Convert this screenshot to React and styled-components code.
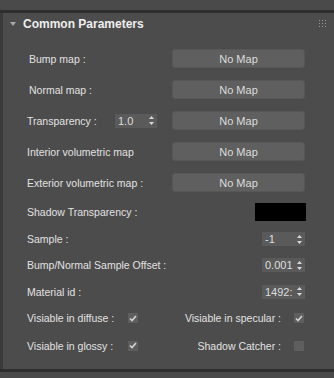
import React from "react";
import styled, { createGlobalStyle } from "styled-components";

const Global = createGlobalStyle`
  html, body { margin: 0; padding: 0; background: #4b4b4b; }
  body { font-family: "Liberation Sans", Arial, sans-serif; font-size: 10.5px; color: #e4e4e4; }
  * { box-sizing: border-box; }
`;

const Page = styled.div`
  width: 334px;
  height: 378px;
  display: flex;
  flex-direction: column;
  background: #4b4b4b;
  overflow: hidden;
`;

const Band = styled.div`
  height: ${(p) => p.$h}px;
  background: #4a4a4a;
  flex: none;
`;

const Divider = styled.div`
  height: 3px;
  background: #2e2e2e;
  flex: none;
`;

const Rollout = styled.div`
  flex: 1;
  display: flex;
  min-height: 0;
`;

const LeftStrip = styled.div`
  width: 3px;
  background: #3a3a3a;
  flex: none;
`;

const Body = styled.div`
  flex: 1;
  display: flex;
  flex-direction: column;
  background: #4c4c4c;
`;

const Header = styled.div`
  height: 22px;
  margin-bottom: 8px;
  display: flex;
  align-items: center;
  padding-left: 7px;
  padding-right: 8px;
`;

const Title = styled.div`
  font-weight: bold;
  font-size: 12px;
  color: #eeeeee;
  margin-left: 7px;
  flex: 1;
`;

const Row = styled.div`
  height: ${(p) => p.$h}px;
  display: flex;
  align-items: center;
  padding-left: 24px;
  padding-right: 29px;
`;

const Label = styled.div`
  flex: 1;
  white-space: nowrap;
  color: #e2e2e2;
`;

const MapButton = styled.div`
  width: 133px;
  height: ${(p) => p.$h || 19}px;
  background: #5f5f5f;
  border: 1px solid #575757;
  border-radius: 3px;
  display: flex;
  align-items: center;
  justify-content: center;
  color: #dcdcdc;
  font-size: 11px;
`;

const Spinner = styled.div`
  width: ${(p) => p.$w}px;
  height: 14px;
  background: #5a5a5a;
  display: flex;
  align-items: center;
  justify-content: space-between;
  padding: 0 3px 0 3px;
  margin-right: ${(p) => p.$mr || 0}px;
  color: #dedede;
  font-size: 11px;
  white-space: nowrap;
  overflow: hidden;
`;

const Swatch = styled.div`
  width: 51px;
  height: 18px;
  background: #000;
  margin-right: -1px;
`;

const CheckGrid = styled.div`
  height: ${(p) => p.$h}px;
  display: grid;
  grid-template-columns: 101px 10px 1fr 10px;
  align-items: center;
  padding-left: 24px;
  padding-right: 30px;
`;

const RightLabel = styled.div`
  text-align: right;
  padding-right: 13px;
  white-space: nowrap;
  color: #e2e2e2;
`;

const Box = styled.div`
  width: 10px;
  height: 10px;
  background: #5e5e5e;
  display: flex;
  align-items: center;
  justify-content: center;
`;

const Arrows = () => (
  <svg width="5" height="9" viewBox="0 0 5 9">
    <path d="M2.5 0 L5 3 L0 3 Z" fill="#d8d8d8" />
    <path d="M0 6 L5 6 L2.5 9 Z" fill="#d8d8d8" />
  </svg>
);

const Check = ({ on }) => (
  <Box>
    {on && (
      <svg width="8" height="7" viewBox="0 0 8 7">
        <path d="M1 3.5 L3 5.5 L7 1" stroke="#d4d4d4" strokeWidth="1.6" fill="none" />
      </svg>
    )}
  </Box>
);

const Grip = () => (
  <svg width="7" height="8" viewBox="0 0 7 8">
    {[0, 3, 6].map((x) =>
      [0, 3, 6].map((y) => <rect key={`${x}-${y}`} x={x} y={y} width="1" height="1" fill="#9a9a9a" />)
    )}
  </svg>
);

const Tri = () => (
  <svg width="6" height="5" viewBox="0 0 6 5">
    <path d="M0 0 L6 0 L3 4 Z" fill="#a8a8a8" />
  </svg>
);

const mapRows = [
  { label: "Bump map :", pad: 2 },
  { label: "Normal map :", pad: 2 },
  { label: "Transparency :", spin: "1.0" },
  { label: "Interior volumetric map" },
  { label: "Exterior volumetric map :" },
];

const PadLabel = styled(Label)`
  padding-left: ${(p) => p.$pad || 0}px;
`;

export default function App() {
  return (
    <Page>
      <Global />
      <Band $h={10} />
      <Divider />
      <Rollout>
        <LeftStrip />
        <Body>
          <Header>
            <Tri />
            <Title>Common Parameters</Title>
            <Grip />
          </Header>
          {mapRows.map((r) => (
            <Row key={r.label} $h={31}>
              <PadLabel $pad={r.pad}>{r.label}</PadLabel>
              {r.spin && (
                <Spinner $w={42} $mr={15}>
                  <span>{r.spin}</span>
                  <Arrows />
                </Spinner>
              )}
              <MapButton>No Map</MapButton>
            </Row>
          ))}
          <Row $h={28}>
            <Label>Shadow Transparency :</Label>
            <Swatch />
          </Row>
          <Row $h={26}>
            <Label>Sample :</Label>
            <Spinner $w={43}>
              <span>-1</span>
              <Arrows />
            </Spinner>
          </Row>
          <Row $h={26}>
            <Label>Bump/Normal Sample Offset :</Label>
            <Spinner $w={43}>
              <span>0.001</span>
              <Arrows />
            </Spinner>
          </Row>
          <Row $h={27}>
            <Label>Material id :</Label>
            <Spinner $w={43}>
              <span>1492:</span>
              <Arrows />
            </Spinner>
          </Row>
          <CheckGrid $h={26}>
            <Label>Visiable in diffuse :</Label>
            <Check on />
            <RightLabel>Visiable in specular :</RightLabel>
            <Check on />
          </CheckGrid>
          <CheckGrid $h={29}>
            <Label>Visiable in glossy :</Label>
            <Check on />
            <RightLabel>Shadow Catcher :</RightLabel>
            <Check />
          </CheckGrid>
        </Body>
      </Rollout>
      <Divider />
      <Band $h={6} />
    </Page>
  );
}
